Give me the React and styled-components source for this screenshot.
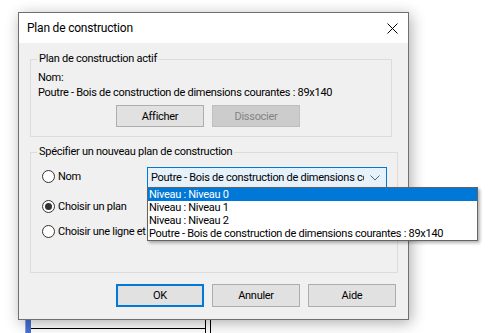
import React from 'react';
import styled, { createGlobalStyle } from 'styled-components';

const Global = createGlobalStyle`
  html, body { margin: 0; padding: 0; background: #ffffff; }
  body { font-family: Roboto, "Noto Sans", sans-serif; font-size: 11px; letter-spacing: -0.28px; color: #000; }
`;

const Page = styled.div`
  position: relative;
  width: 496px;
  height: 333px;
  overflow: hidden;
  padding: 12px 0 0 18px;
  box-sizing: border-box;
`;

const Backdrop = styled.svg`
  position: absolute;
  left: 0;
  top: 0;
  z-index: 0;
`;

const Dialog = styled.div`
  position: relative;
  z-index: 1;
  width: 391px;
  height: 308px;
  box-sizing: border-box;
  border: 1px solid #6f6f6f;
  background: #f0f0f0;
  box-shadow: 2px 3px 14px rgba(0, 0, 0, 0.32);
  display: flex;
  flex-direction: column;
`;

const TitleBar = styled.div`
  height: 30px;
  background: #ffffff;
  display: flex;
  align-items: center;
  justify-content: space-between;
  padding: 0 10px 0 8px;
`;

const Title = styled.span`
  font-size: 12px;
  letter-spacing: -0.2px;
  line-height: 15px;
`;

const Close = styled.svg`
  display: block;
`;

const Body = styled.div`
  flex: 1;
  padding: 9px 0 0 11px;
  display: flex;
  flex-direction: column;
`;

const Group = styled.fieldset`
  margin: ${p => p.$top}px 0 0 0;
  padding: 0;
  width: ${p => p.$w}px;
  height: ${p => p.$h}px;
  box-sizing: border-box;
  border: 1px solid #dcdcdc;
  min-width: 0;
`;

const Legend = styled.legend`
  margin-left: 6px;
  padding: 0 2px;
  font-size: 11px;
  line-height: 14px;
`;

const Line = styled.div`
  padding-left: 7px;
  line-height: 15px;
  white-space: nowrap;
  margin-top: ${p => p.$top || 0}px;
`;

const ButtonRow = styled.div`
  display: flex;
  gap: 8px;
  margin: ${p => p.$top}px 0 0 ${p => p.$left}px;
`;

const Button = styled.div`
  width: 88px;
  height: ${p => p.$h || 22}px;
  box-sizing: border-box;
  display: flex;
  align-items: center;
  justify-content: center;
  background: ${p => (p.$disabled ? '#cccccc' : '#e1e1e1')};
  border: ${p => (p.$default ? '2px solid #0078d7' : p.$disabled ? '1px solid #bfbfbf' : '1px solid #adadad')};
  color: ${p => (p.$disabled ? '#838383' : '#000')};
  font-size: 11px;
`;

const Options = styled.div`
  display: flex;
  flex-direction: column;
  padding: 8px 0 0 11px;
`;

const OptionRow = styled.div`
  display: flex;
  align-items: center;
  height: ${p => p.$h}px;
  margin-top: ${p => p.$top || 0}px;
  white-space: nowrap;
`;

const Radio = styled.span`
  width: 13px;
  height: 13px;
  box-sizing: border-box;
  border-radius: 50%;
  border: 1px solid #333333;
  background: #ffffff;
  display: flex;
  align-items: center;
  justify-content: center;
  flex-shrink: 0;
  margin-top: ${p => p.$shift || 0}px;
  &::after {
    content: '';
    width: 7px;
    height: 7px;
    border-radius: 50%;
    background: ${p => (p.$checked ? '#333333' : 'transparent')};
  }
`;

const OptionLabel = styled.span`
  margin-left: 3px;
  width: ${p => p.$w}px;
  line-height: 15px;
  margin-top: ${p => p.$shift || 0}px;
`;

const ComboWrap = styled.div`
  position: relative;
`;

const Combo = styled.div`
  width: 240px;
  height: 21px;
  box-sizing: border-box;
  border: 1px solid #0078d7;
  background: #e5f1fb;
  display: flex;
  align-items: center;
  padding: 0 6px 0 3px;
`;

const ComboText = styled.span`
  flex: 1;
  overflow: hidden;
  white-space: nowrap;
  line-height: 15px;
`;

const Chevron = styled.svg`
  margin-left: 6px;
  flex-shrink: 0;
`;

const List = styled.ul`
  position: absolute;
  left: 0;
  top: 20px;
  width: 329px;
  margin: 0;
  padding: 0;
  list-style: none;
  background: #ffffff;
  border: 1px solid #646464;
  box-shadow: 2px 2px 3px rgba(0, 0, 0, 0.3);
  z-index: 2;
`;

const Item = styled.li`
  height: 13px;
  line-height: 13px;
  padding-left: 1px;
  white-space: nowrap;
  background: ${p => (p.$selected ? '#0078d7' : 'transparent')};
  color: ${p => (p.$selected ? '#ffffff' : '#000000')};
`;

const Footer = styled.div`
  margin-top: auto;
  margin-bottom: 12px;
`;

const items = [
  'Niveau : Niveau 0',
  'Niveau : Niveau 1',
  'Niveau : Niveau 2',
  'Poutre - Bois de construction de dimensions courantes : 89x140',
];

export default function App() {
  return (
    <Page>
      <Global />
      <Backdrop width="496" height="333">
        <rect x="25" y="300" width="6" height="33" fill="#4a6fd0" />
        <rect x="25" y="300" width="1" height="33" fill="#8aa2e4" />
        <line x1="31" y1="328.5" x2="205" y2="328.5" stroke="#000" />
        <line x1="205.5" y1="300" x2="205.5" y2="333" stroke="#000" />
        <line x1="210.5" y1="300" x2="210.5" y2="333" stroke="#000" />
      </Backdrop>
      <Dialog>
        <TitleBar>
          <Title>Plan de construction</Title>
          <Close width="11" height="11" viewBox="0 0 11 11">
            <path d="M0.5 0.5 L10.5 10.5 M10.5 0.5 L0.5 10.5" stroke="#000" strokeWidth="1" />
          </Close>
        </TitleBar>
        <Body>
          <Group $top={0} $w={362} $h={85}>
            <Legend>Plan de construction actif</Legend>
            <Line $top={4}>Nom:</Line>
            <Line>Poutre - Bois de construction de dimensions courantes : 89x140</Line>
            <ButtonRow $top={5} $left={85}>
              <Button>Afficher</Button>
              <Button $disabled>Dissocier</Button>
            </ButtonRow>
          </Group>
          <Group $top={8} $w={368} $h={128}>
            <Legend>Spécifier un nouveau plan de construction</Legend>
            <Options>
              <OptionRow $h={21}>
                <Radio $shift={-3} />
                <OptionLabel $w={89} $shift={-3}>Nom</OptionLabel>
                <ComboWrap>
                  <Combo>
                    <ComboText>Poutre - Bois de construction de dimensions courantes : 89x140</ComboText>
                    <Chevron width="10" height="6" viewBox="0 0 10 6">
                      <path d="M0.5 0.5 L5 5 L9.5 0.5" fill="none" stroke="#606060" strokeWidth="1" />
                    </Chevron>
                  </Combo>
                  <List>
                    {items.map((t, i) => (
                      <Item key={t} $selected={i === 0}>{t}</Item>
                    ))}
                  </List>
                </ComboWrap>
              </OptionRow>
              <OptionRow $h={16} $top={10}>
                <Radio $checked />
                <OptionLabel>Choisir un plan</OptionLabel>
              </OptionRow>
              <OptionRow $h={16} $top={9}>
                <Radio />
                <OptionLabel>Choisir une ligne et un plan</OptionLabel>
              </OptionRow>
            </Options>
          </Group>
          <Footer>
            <ButtonRow $top={0} $left={86}>
              <Button $default $h={23}>OK</Button>
              <Button $h={23}>Annuler</Button>
              <Button $h={23}>Aide</Button>
            </ButtonRow>
          </Footer>
        </Body>
      </Dialog>
    </Page>
  );
}
